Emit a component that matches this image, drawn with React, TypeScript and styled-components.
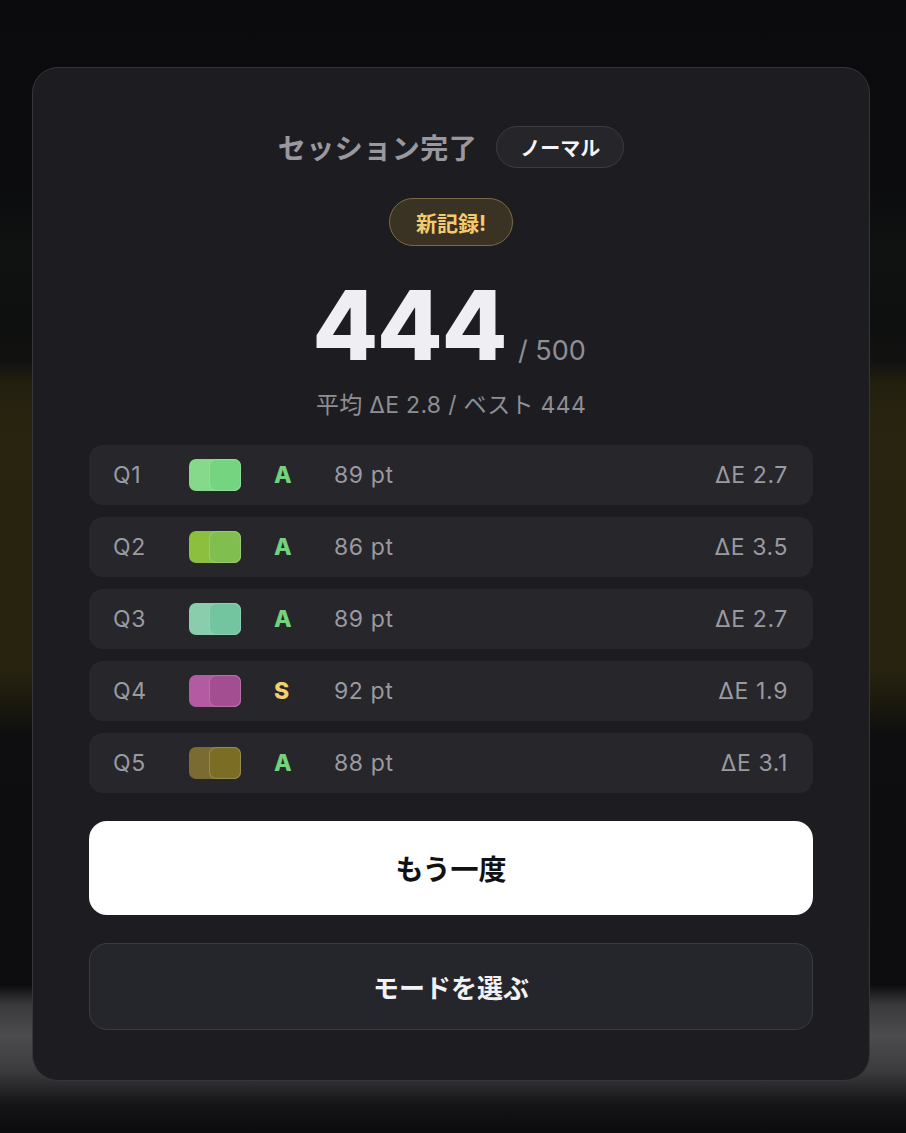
import React from "react";
import styled, { createGlobalStyle } from "styled-components";

const GlobalStyle = createGlobalStyle`
  html, body {
    margin: 0;
    padding: 0;
  }
  body {
    font-family: Inter, "Noto Sans CJK JP", sans-serif;
    background: #0b0b0e;
  }
`;

const Backdrop = styled.div`
  width: 906px;
  height: 1133px;
  box-sizing: border-box;
  padding: 67px 36px 0 32px;
  background: linear-gradient(
    180deg,
    #0b0b0e 0px,
    #0c0c0f 190px,
    #0f1211 250px,
    #0e100f 330px,
    #121210 362px,
    #24200f 385px,
    #29240f 430px,
    #28230f 670px,
    #1a180e 705px,
    #0e0e10 735px,
    #0d0d10 985px,
    #3a3a3c 1005px,
    #4c4c4e 1035px,
    #3c3c3e 1070px,
    #141416 1105px,
    #0b0b0e 1133px
  );
`;

const Card = styled.div`
  width: 838px;
  box-sizing: border-box;
  background: #1d1d21;
  border: 1px solid #35353b;
  border-radius: 26px;
  padding: 57px 56px 50px;
  display: flex;
  flex-direction: column;
  align-items: center;
`;

const Header = styled.div`
  display: flex;
  align-items: center;
  gap: 19px;
  height: 44px;
`;

const Title = styled.div`
  font-size: 28px;
  font-weight: 700;
  color: #98989e;
  letter-spacing: 0.5px;
`;

const ModePill = styled.div`
  height: 42px;
  box-sizing: border-box;
  padding: 0 23px;
  border-radius: 21px;
  border: 1px solid #3b3b41;
  background: #25252a;
  color: #f4f4f6;
  font-size: 20px;
  font-weight: 700;
  display: flex;
  align-items: center;
`;

const RecordBadge = styled.div`
  margin-top: 29px;
  height: 48px;
  box-sizing: border-box;
  padding: 0 26px;
  border-radius: 24px;
  border: 1.5px solid #7b6a45;
  background: #3a3222;
  color: #f3cb6f;
  font-size: 21px;
  font-weight: 700;
  display: flex;
  align-items: center;
`;

const ScoreLine = styled.div`
  margin-top: 31px;
  display: flex;
  align-items: baseline;
  gap: 12px;
  padding-right: 4px;
`;

const Score = styled.div`
  font-family: Inter, sans-serif;
  font-size: 96px;
  font-weight: 800;
  color: #efeff3;
  line-height: 1;
  letter-spacing: -1.5px;
`;

const Total = styled.div`
  font-size: 27px;
  color: #8f8f95;
`;

const Summary = styled.div`
  margin-top: 13px;
  font-size: 23px;
  color: #8e8e94;
  letter-spacing: 0.3px;
`;

const Rows = styled.div`
  margin-top: 25px;
  width: 100%;
  display: flex;
  flex-direction: column;
  gap: 12px;
`;

const Row = styled.div`
  height: 60px;
  box-sizing: border-box;
  background: #26262b;
  border-radius: 14px;
  padding: 0 25px 0 24px;
  display: flex;
  align-items: center;
  font-size: 23px;
  letter-spacing: 0.6px;
  color: #9a9aa0;
`;

const QLabel = styled.div`
  width: 76px;
`;

const Swatch = styled.div<{ $color: string }>`
  position: relative;
  width: 52px;
  height: 32px;
  margin-right: 33px;
  border-radius: 7px;
  background: ${(p) => p.$color};
`;

const Guess = styled.div<{ $color: string }>`
  position: absolute;
  top: 0;
  right: 0;
  width: 32px;
  height: 32px;
  box-sizing: border-box;
  border-radius: 7px;
  background: ${(p) => p.$color};
  border: 1.5px solid rgba(255, 255, 255, 0.2);
`;

const Grade = styled.div<{ $grade: string }>`
  width: 60px;
  font-weight: 800;
  letter-spacing: 0;
  color: ${(p) => (p.$grade === "S" ? "#f3cf6e" : "#72d37c")};
`;

const Points = styled.div`
  flex: 1;
`;

const Delta = styled.div``;

const PrimaryButton = styled.button`
  margin-top: 28px;
  width: 100%;
  height: 94px;
  border: none;
  border-radius: 18px;
  background: #ffffff;
  color: #111113;
  font-family: inherit;
  font-size: 28px;
  font-weight: 700;
`;

const SecondaryButton = styled.button`
  margin-top: 28px;
  width: 100%;
  height: 87px;
  border: 1.5px solid #3b3b41;
  border-radius: 18px;
  background: #25262b;
  color: #f2f2f4;
  font-family: inherit;
  font-size: 26px;
  font-weight: 700;
`;

const results = [
  { q: "Q1", a: "#86d98a", b: "#75d47f", grade: "A", pt: 89, de: "2.7" },
  { q: "Q2", a: "#8cbf3e", b: "#7fbe4f", grade: "A", pt: 86, de: "3.5" },
  { q: "Q3", a: "#89cdac", b: "#73c5a0", grade: "A", pt: 89, de: "2.7" },
  { q: "Q4", a: "#b25ba3", b: "#a24e90", grade: "S", pt: 92, de: "1.9" },
  { q: "Q5", a: "#7a6b32", b: "#7c6d24", grade: "A", pt: 88, de: "3.1" },
];

export default function App() {
  return (
    <>
      <GlobalStyle />
      <Backdrop>
        <Card>
          <Header>
            <Title>セッション完了</Title>
            <ModePill>ノーマル</ModePill>
          </Header>
          <RecordBadge>新記録!</RecordBadge>
          <ScoreLine>
            <Score>444</Score>
            <Total>/ 500</Total>
          </ScoreLine>
          <Summary>平均 ΔE 2.8 / ベスト 444</Summary>
          <Rows>
            {results.map((r) => (
              <Row key={r.q}>
                <QLabel>{r.q}</QLabel>
                <Swatch $color={r.a}>
                  <Guess $color={r.b} />
                </Swatch>
                <Grade $grade={r.grade}>{r.grade}</Grade>
                <Points>{r.pt} pt</Points>
                <Delta>ΔE {r.de}</Delta>
              </Row>
            ))}
          </Rows>
          <PrimaryButton>もう一度</PrimaryButton>
          <SecondaryButton>モードを選ぶ</SecondaryButton>
        </Card>
      </Backdrop>
    </>
  );
}
